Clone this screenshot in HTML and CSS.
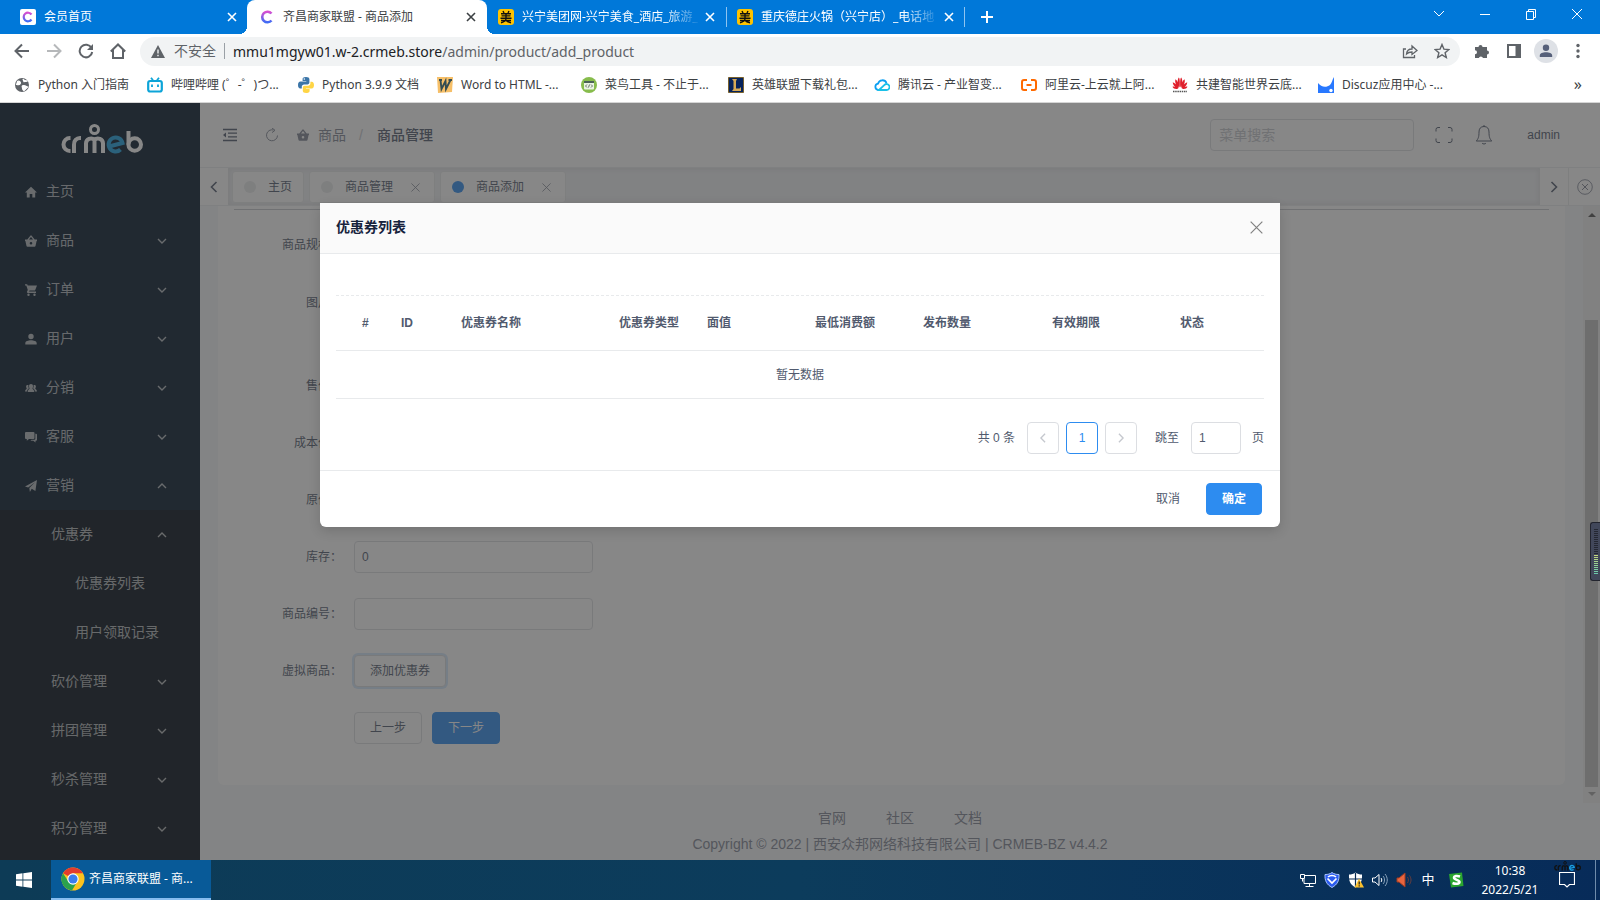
FILE: index.html
```html
<!DOCTYPE html>
<html lang="zh-CN">
<head>
<meta charset="utf-8">
<title>齐昌商家联盟 - 商品添加</title>
<link rel="stylesheet" href="styles.css">
</head>
<body>
<svg class="defs" aria-hidden="true">
  <defs>
    <linearGradient id="cg" x1="0" y1="0" x2="0" y2="1"><stop offset="0" stop-color="#d94fd0"/><stop offset="1" stop-color="#3f6cf5"/></linearGradient>
    <symbol id="x" viewBox="0 0 10 10"><path d="M1 1l8 8M9 1l-8 8" fill="none" stroke="currentColor" stroke-width="1.6"/></symbol>
    <symbol id="xthin" viewBox="0 0 10 10"><path d="M.5.5l9 9M9.500.5l-9 9" fill="none" stroke="currentColor" stroke-width=".9"/></symbol>
    <symbol id="down" viewBox="0 0 10 10"><path d="M1 3l4 4 4-4" fill="none" stroke="currentColor" stroke-width="1.4"/></symbol>
    <symbol id="up" viewBox="0 0 10 10"><path d="M1 7l4-4 4 4" fill="none" stroke="currentColor" stroke-width="1.4"/></symbol>
    <symbol id="left" viewBox="0 0 12 12"><path d="M8.500 1l-5 5 5 5" fill="none" stroke="currentColor" stroke-width="1.6"/></symbol>
    <symbol id="right" viewBox="0 0 12 12"><path d="M3.500 1l5 5-5 5" fill="none" stroke="currentColor" stroke-width="1.6"/></symbol>
    <symbol id="basket" viewBox="0 0 12 12"><path fill="currentColor" fill-rule="evenodd" d="M0 4.500h2.300L5.300.8a.9.9 0 0 1 1.400 0l3 3.700H12v1.400h-.4L10.500 11a1 1 0 0 1-1 .8h-7a1 1 0 0 1-1-.8L.4 5.900H0zM4 4.500h4L6 2.100zM6 7a1.300 1.300 0 1 0 0 2.600A1.300 1.300 0 0 0 6 7z"/></symbol>
    <symbol id="mei" viewBox="0 0 16 16"><rect width="16" height="16" rx="3" fill="#ffc300"/><path d="M5 2l1 2M11 2l-1 2M3 4.700h10M3.500 6.900h9M2.500 9.200h11M8 4.500v5M3 11.500h10M8 9.500c0 2-2 3.500-5 4.300M8 11.300c1 1.300 2.500 2 5 2.500" stroke="#111" stroke-width="1.400" fill="none"/></symbol>
    <symbol id="crmeb" viewBox="0 0 82 30"><g fill="none" stroke="currentColor" stroke-width="4"><path d="M9.500 14H9a6.500 6.500 0 0 0 0 13h.5M13 29v-8.500a6 6 0 0 1 6-6.500h1M25 29v-9.500a5 5 0 0 1 8.500-3.500v13M33.500 16a5 5 0 0 1 8.500 3.500V29M67.500 7v13.500"/><circle cx="33.500" cy="5.500" r="4" stroke-width="3"/><circle cx="73.700" cy="20.500" r="6.300"/></g><path class="logo-e" d="M48 22.500l13.500-3.500a7 7 0 1 0-2 6.500" fill="none" stroke-width="4"/></symbol>
  </defs>
</svg>

<header class="browser">
  <div class="tabstrip">
    <div class="tab"><svg class="fav" viewBox="0 0 16 16"><rect width="16" height="16" rx="2" fill="#fff"/><path d="M11.500 5.500a4.300 4.300 0 1 0 0 5" fill="none" stroke="url(#cg)" stroke-width="2.200"/></svg><span class="tab-title">会员首页</span><button aria-label="关闭"><svg><use href="#x"/></svg></button></div>
    <div class="tab active"><svg class="fav" viewBox="0 0 16 16"><path d="M12.500 4.500a5.300 5.300 0 1 0 0 7" fill="none" stroke="url(#cg)" stroke-width="2.600"/></svg><span class="tab-title">齐昌商家联盟 - 商品添加</span><button aria-label="关闭"><svg><use href="#x"/></svg></button></div>
    <div class="tab"><svg class="fav"><use href="#mei"/></svg><span class="tab-title fade">兴宁美团网-兴宁美食_酒店_旅游_</span><button aria-label="关闭"><svg><use href="#x"/></svg></button></div>
    <div class="tab ruled"><svg class="fav"><use href="#mei"/></svg><span class="tab-title fade">重庆德庄火锅（兴宁店）_电话地</span><button aria-label="关闭"><svg><use href="#x"/></svg></button></div>
    <button class="newtab" aria-label="新标签页"><svg viewBox="0 0 12 12"><path d="M6 0v12M0 6h12" stroke="#fff" stroke-width="2"/></svg></button>
    <div class="winctl">
      <button aria-label="搜索标签页"><svg viewBox="0 0 12 12"><path d="M1 3l5 5 5-5"/></svg></button>
      <button aria-label="最小化"><svg viewBox="0 0 12 12"><path d="M1 6.500h10"/></svg></button>
      <button aria-label="还原"><svg viewBox="0 0 12 12"><path d="M1.500 3.500h7v8h-7zM3.500 3.500v-2h7v8h-2"/></svg></button>
      <button aria-label="关闭窗口"><svg viewBox="0 0 12 12"><path d="M1 1l10 10M11 1L1 11"/></svg></button>
    </div>
  </div>
  <div class="toolbar">
    <button aria-label="后退"><svg viewBox="0 0 16 16"><path d="M15 8H2M8 1.500L1.500 8 8 14.500"/></svg></button>
    <button aria-label="前进" class="off"><svg viewBox="0 0 16 16"><path d="M1 8h13M8 1.500L14.500 8 8 14.500"/></svg></button>
    <button aria-label="重新加载"><svg viewBox="0 0 16 16"><path d="M13.500 5A6.300 6.300 0 1 0 14.200 9"/><path d="M15 1v6H9z" fill="#5f6368" stroke="none"/></svg></button>
    <button aria-label="主页"><svg viewBox="0 0 16 16"><path d="M.8 8.500L8 1.500l7.200 7M3 7v8h10V7"/></svg></button>
    <div class="omnibox">
      <svg class="warn" viewBox="0 0 14 13"><path fill="#5f6368" fill-rule="evenodd" d="M7 0l7 13H0zM6.300 4.500v4h1.400v-4zm0 5.200v1.500h1.400V9.700z"/></svg>
      <span class="insecure">不安全</span>
      <span class="url"><b>mmu1mgyw01.w-2.crmeb.store</b>/admin/product/add_product</span>
      <button aria-label="分享"><svg viewBox="0 0 16 16"><path d="M4 6H1.500v8.500h11V12M4.500 11c.3-3.500 2.500-5 5.500-5V3l5 4.500-5 4V9c-2.500 0-4 .5-5.500 2z" stroke-width="1.300"/></svg></button>
      <button aria-label="收藏"><svg viewBox="0 0 16 16"><path d="M8 1.500l1.900 4.600 5 .4-3.800 3.200 1.200 4.800L8 11.900l-4.300 2.600 1.200-4.800L1.100 6.500l5-.4z" stroke-width="1.400"/></svg></button>
    </div>
    <button aria-label="扩展程序"><svg viewBox="0 0 16 16"><path d="M1 4h3.500a2 2 0 1 1 4 0H13v3.500a2 2 0 1 1 0 4V15H9a2.200 2.200 0 0 0-4.200 0H1v-3.800a2 2 0 0 0 0-4z" fill="#5f6368" stroke="none"/></svg></button>
    <button aria-label="侧边栏"><svg viewBox="0 0 16 16"><path d="M2 2h12v12H2z" stroke-width="2"/><path d="M9.500 2H14v12H9.500z" fill="#5f6368" stroke="none"/></svg></button>
    <button aria-label="用户" class="avatar"><svg viewBox="0 0 16 16"><path d="M8 1.500a3.200 3.200 0 1 1 0 6.400 3.200 3.200 0 0 1 0-6.400zM1.800 14v-1.500c0-2 3-3.200 6.200-3.200s6.200 1.200 6.200 3.200V14z" fill="#56607a" stroke="none"/></svg></button>
    <button aria-label="菜单"><svg viewBox="0 0 16 16"><g fill="#5f6368" stroke="none"><circle cx="8" cy="2.500" r="1.700"/><circle cx="8" cy="8" r="1.700"/><circle cx="8" cy="13.500" r="1.700"/></g></svg></button>
  </div>
  <nav class="bookmarks">
    <a href="#"><svg viewBox="0 0 16 16"><circle cx="8" cy="8" r="7" fill="#5f6368"/><path d="M3 4.500c3-1 4 1 3 2.500s-3 0-4 .5M9 2l1 2.500 3.500-.5M8 9c2-1 4 0 5.500 1L10 13.500c-2-.5-1-3-2-4.500" stroke="#fff" stroke-width="1.300" fill="#fff"/></svg>Python 入门指南</a>
    <a href="#"><svg viewBox="0 0 16 16"><path d="M4 .8l2 2.500M12 .8l-2 2.500" stroke="#0ca4d8" stroke-width="1.800"/><rect x="1.200" y="4" width="13.600" height="10.500" rx="2" fill="none" stroke="#0ca4d8" stroke-width="2.200"/><path d="M5 7.500v2.500M11 7.500v2.500" stroke="#0ca4d8" stroke-width="1.800"/></svg>哔哩哔哩 (゜-゜)つ...</a>
    <a href="#"><svg viewBox="0 0 16 16"><path d="M8 0C5 0 4.600 1 4.600 2.200V4H8.300v.6H2.500C.8 4.600 0 6 0 8s.8 3.500 2.300 3.500h1.500V9.600c0-1.200 1-2.200 2.300-2.200h3.500c1 0 1.800-.8 1.800-1.900V2.300C11.400.8 10.200 0 8 0z" fill="#3b75a8"/><path d="M8.200 16c3 0 3.400-1 3.400-2.200V12H7.900v-.6h5.800c1.600 0 2.300-1.400 2.300-3.400s-.8-3.300-2.300-3.300h-1.300v1.800c0 1.200-1 2.200-2.300 2.200H6.600c-1 0-1.800.8-1.800 1.900v3.200c0 1.500 1.200 2.200 3.400 2.200z" fill="#ffd545"/><circle cx="6.300" cy="2" r=".8" fill="#fff"/></svg>Python 3.9.9 文档</a>
    <a href="#"><svg viewBox="0 0 16 16"><path d="M0 0h16l-1 15-14 1z" fill="#f6bf68"/><path d="M2 3h3M3.500 3l1 9 4-8 .5 8 4.500-9M11.500 3H15" stroke="#344d52" stroke-width="1.900" fill="none"/></svg>Word to HTML -...</a>
    <a href="#"><svg viewBox="0 0 16 16"><circle cx="8" cy="8" r="8" fill="#87bc4c"/><rect x="3" y="4" width="10" height="8.500" rx="1" fill="#eaf3e3"/><path d="M3 5h10" stroke="#4b6257" stroke-width="2"/><path d="M6 7.500L4.500 9 6 10.500M10 7.500L11.500 9 10 10.500M8.500 7.500l-1 3" stroke="#66746a" fill="none"/></svg>菜鸟工具 - 不止于...</a>
    <a href="#"><svg viewBox="0 0 16 16"><path d="M.5.5h15v15H.5z" fill="#06235c" stroke="#79612c"/><path d="M4 2h5L8 4v7.500h3.500L13 10v4H4l1.500-2V4z" fill="#d6a956"/></svg>英雄联盟下载礼包...</a>
    <a href="#"><svg viewBox="0 0 16 16" fill="none"><path d="M4 13a3.200 3.200 0 0 1 0-6.300A4.500 4.500 0 0 1 12.500 6" stroke="#0a9ff2" stroke-width="1.800"/><path d="M3.500 13h9a3 3 0 1 0-2-5.200L5 13" stroke="#19c0e8" stroke-width="1.800"/></svg>腾讯云 - 产业智变...</a>
    <a href="#"><svg viewBox="0 0 16 16"><path d="M6 3H3a2 2 0 0 0-2 2v6a2 2 0 0 0 2 2h3M10 3h3a2 2 0 0 1 2 2v6a2 2 0 0 1-2 2h-3M5.500 8h5" fill="none" stroke="#ff6a00" stroke-width="2"/></svg>阿里云-上云就上阿...</a>
    <a href="#"><svg viewBox="0 0 16 16"><g fill="#e0202c"><path d="M7.700 10.500C5.500 7 5 3 6.800.5 8 1.500 8 6 7.700 10.500zM8.300 10.500C10.500 7 11 3 9.200.5 8 1.500 8 6 8.300 10.500zM7 10.800C4 8.500 2.500 5 3.500 2.200 5.500 3.500 6.500 7 7 10.800zM9 10.800c3-2.300 4.500-5.800 3.500-8.600C10.500 3.500 9.500 7 9 10.800zM6.500 11.200C3 10.500.8 8 .8 5.200 3.300 6 5.500 8.500 6.500 11.200zM9.500 11.200c3.500-.7 5.700-3.200 5.700-6C12.700 6 10.500 8.500 9.500 11.200zM6 11.700c-2.500.7-4.500 0-5.500-2C2.500 9.300 4.500 10 6 11.700zM10 11.700c2.500.7 4.500 0 5.500-2-2-.4-4 .3-5.500 2z"/></g><path d="M1 14.500h14" stroke="#555" stroke-width="1.500" stroke-dasharray="1.500 .7"/></svg>共建智能世界云底...</a>
    <a href="#"><svg viewBox="0 0 16 16"><path d="M0 6c3 4 8 5 12 2 2-2 2-5 4-8v16H0z" fill="#2878ff"/><circle cx="13" cy="13.500" r="1.700" fill="#fff"/></svg>Discuz应用中心 -...</a>
    <button class="more" aria-label="更多书签">»</button>
  </nav>
</header>

<div class="app">
  <aside class="side">
    <div class="logo"><svg role="img" aria-label="crmeb"><use href="#crmeb"/></svg></div>
    <nav class="menu">
      <a href="#"><svg class="mi" viewBox="0 0 12 12"><path fill="currentColor" d="M6 .8l6 5.700h-1.800v5H7.300V8H4.700v3.500H1.800v-5H0z"/></svg><span>主页</span></a>
      <a href="#"><svg class="mi"><use href="#basket"/></svg><span>商品</span><svg class="ar"><use href="#down"/></svg></a>
      <a href="#"><svg class="mi" viewBox="0 0 12 12"><path fill="currentColor" d="M0 .3h2.200l.5 1.200H12L10 6.500H4.500L4 7.600h7V9H2.500L1.800 8l1-2L1.300 1.500H0zM3.500 9.500a1.200 1.200 0 1 1 0 2.400 1.200 1.200 0 0 1 0-2.400zM9.500 9.500a1.200 1.200 0 1 1 0 2.400 1.200 1.200 0 0 1 0-2.400z"/></svg><span>订单</span><svg class="ar"><use href="#down"/></svg></a>
      <a href="#"><svg class="mi" viewBox="0 0 12 12"><path fill="currentColor" d="M6 .8a2.700 2.700 0 1 1 0 5.400A2.700 2.700 0 0 1 6 .8zM.3 11.500V10c0-1.800 3-2.800 5.700-2.800s5.700 1 5.700 2.800v1.500z"/></svg><span>用户</span><svg class="ar"><use href="#down"/></svg></a>
      <a href="#"><svg class="mi" viewBox="0 0 12 12"><path fill="currentColor" d="M6 2c1.300 0 2 .9 2 2.200C8 5.500 7.500 6 7.500 6.700 8 7.500 9.300 7.700 9.300 10H2.700c0-2.300 1.300-2.500 1.800-3.300C4.500 6 4 5.500 4 4.200 4 2.900 4.700 2 6 2zM2.500 3c.4 0 .8.100 1 .3-.3 1.200 0 2.200.4 3C3.500 7 2.200 7.500 2 9.500H0C0 7.500 1.200 7.500 1.700 6.700 1.700 6 1.100 5.700 1.100 4.600 1.100 3.700 1.600 3 2.500 3zM9.500 3c-.4 0-.8.100-1 .3.300 1.200 0 2.200-.4 3 .4.700 1.700 1.200 1.900 3.200h2c0-2-1.200-2-1.700-2.800 0-.7.600-1 .6-2.100C10.900 3.700 10.400 3 9.500 3z"/></svg><span>分销</span><svg class="ar"><use href="#down"/></svg></a>
      <a href="#"><svg class="mi" viewBox="0 0 12 12"><path fill="currentColor" d="M1 1h7.500a1 1 0 0 1 1 1v5a1 1 0 0 1-1 1H4L1.800 9.800V8H1a1 1 0 0 1-1-1V2a1 1 0 0 1 1-1zM10.300 2.800h.7a1 1 0 0 1 1 1v5a1 1 0 0 1-1 1h-.5v1.700L8.300 9.800H5.500l1-1H9.300a1 1 0 0 0 1-1z"/></svg><span>客服</span><svg class="ar"><use href="#down"/></svg></a>
      <a href="#"><svg class="mi" viewBox="0 0 12 12"><path fill="currentColor" d="M12 0l-1.600 11-3.700-2.200L4.900 12 4.300 8 10 2.300 3.200 7.600 0 6.500z"/></svg><span>营销</span><svg class="ar"><use href="#up"/></svg></a>
      <div class="sub">
        <a href="#"><span>优惠券</span><svg class="ar"><use href="#up"/></svg></a>
        <a href="#" class="deep"><span>优惠券列表</span></a>
        <a href="#" class="deep"><span>用户领取记录</span></a>
        <a href="#"><span>砍价管理</span><svg class="ar"><use href="#down"/></svg></a>
        <a href="#"><span>拼团管理</span><svg class="ar"><use href="#down"/></svg></a>
        <a href="#"><span>秒杀管理</span><svg class="ar"><use href="#down"/></svg></a>
        <a href="#"><span>积分管理</span><svg class="ar"><use href="#down"/></svg></a>
      </div>
    </nav>
  </aside>

  <div class="main">
    <div class="topbar">
      <button class="fold" aria-label="折叠菜单"><svg viewBox="0 0 16 14"><path d="M1 1.500h14M6 5.200h9M6 8.800h9M1 12.500h14" stroke="currentColor" stroke-width="1.300"/><path d="M1 7l3-2.500v5z" fill="currentColor"/></svg></button>
      <button class="reload" aria-label="刷新"><svg viewBox="0 0 14 14"><path d="M8.500 2A5.500 5.500 0 1 0 12.500 7.500M7 0l3 2.300L7 4.600" fill="none" stroke="currentColor"/></svg></button>
      <nav class="crumbs"><a href="#"><svg><use href="#basket"/></svg>商品</a><i>/</i><b>商品管理</b></nav>
      <input class="search" type="text" placeholder="菜单搜索" aria-label="菜单搜索">
      <button aria-label="全屏"><svg viewBox="0 0 18 18"><path d="M1 5.500V3.500A2 2 0 0 1 3 1.500h2M13 1.500h2a2 2 0 0 1 2 2v2M17 12.500v2a2 2 0 0 1-2 2h-2M5 16.500H3a2 2 0 0 1-2-2v-2" fill="none" stroke="currentColor"/></svg></button>
      <button class="bell" aria-label="通知"><svg viewBox="0 0 18 20"><path d="M9 1.500c-3.500 0-5 2.300-5 5.500 0 5-.8 7-2.800 9h15.600c-2-2-2.800-4-2.800-9 0-3.200-1.500-5.500-5-5.500zM7 18c.5 1.300 3.500 1.300 4 0M8 1h2" fill="none" stroke="currentColor"/></svg></button>
      <a href="#" class="admin">admin</a>
    </div>
    <div class="tags">
      <button class="tagbtn" aria-label="向左"><svg><use href="#left"/></svg></button>
      <div class="taglist">
        <a href="#"><i></i>主页</a>
        <a href="#" class="closable"><i></i>商品管理<svg><use href="#xthin"/></svg></a>
        <a href="#" class="closable current"><i></i>商品添加<svg><use href="#xthin"/></svg></a>
      </div>
      <button class="tagbtn" aria-label="向右"><svg><use href="#right"/></svg></button>
      <button class="tagbtn all" aria-label="关闭全部"><svg viewBox="0 0 16 16"><circle cx="8" cy="8" r="7.300" fill="none" stroke="currentColor" stroke-width=".9"/><path d="M5 5l6 6M11 5l-6 6" stroke="currentColor"/></svg></button>
    </div>
    <div class="view">
      <div class="page">
        <form class="card">
          <div class="row"><span class="lab">商品规格：</span></div>
          <div class="row tall"><span class="lab">图片：</span></div>
          <div class="row"><label class="lab" for="f1">售价：</label><input id="f1" type="text"></div>
          <div class="row"><label class="lab" for="f2">成本价：</label><input id="f2" type="text"></div>
          <div class="row"><label class="lab" for="f3">原价：</label><input id="f3" type="text"></div>
          <div class="row"><label class="lab" for="f4">库存：</label><input id="f4" type="text" value="0"></div>
          <div class="row"><label class="lab" for="f5">商品编号：</label><input id="f5" type="text"></div>
          <div class="row"><label class="lab" for="f6">虚拟商品：</label><button id="f6" type="button" class="btn focus">添加优惠券</button></div>
          <div class="row"><span class="lab"></span><button type="button" class="btn">上一步</button><button type="button" class="btn primary">下一步</button></div>
        </form>
        <footer class="foot">
          <nav><a href="#">官网</a><a href="#">社区</a><a href="#">文档</a></nav>
          <p>Copyright © 2022 | 西安众邦网络科技有限公司 | CRMEB-BZ v4.4.2</p>
        </footer>
      </div>
      <div class="scroll"><svg viewBox="0 0 8 4"><path d="M0 4l4-4 4 4z" fill="#505050"/></svg><div class="thumb"></div><svg viewBox="0 0 8 4"><path d="M0 0l4 4 4-4z" fill="#a3a3a3"/></svg></div>
    </div>
  </div>

  <div class="mask">
    <section class="modal" role="dialog" aria-labelledby="mt">
      <header><h2 id="mt">优惠券列表</h2><button aria-label="关闭"><svg><use href="#xthin"/></svg></button></header>
      <div class="mbody">
        <table>
          <colgroup><col class="c1"><col class="c2"><col class="c3"><col class="c4"><col class="c5"><col class="c5"><col class="c7"><col class="c8"><col class="c9"></colgroup>
          <thead><tr><th>#</th><th>ID</th><th>优惠券名称</th><th>优惠券类型</th><th>面值</th><th>最低消费额</th><th>发布数量</th><th>有效期限</th><th>状态</th></tr></thead>
          <tbody><tr><td colspan="9">暂无数据</td></tr></tbody>
        </table>
        <div class="pager">
          <span class="total">共 0 条</span>
          <button aria-label="上一页"><svg><use href="#left"/></svg></button>
          <button class="cur">1</button>
          <button aria-label="下一页"><svg><use href="#right"/></svg></button>
          <label for="pg">跳至</label><input id="pg" type="text" value="1"><span>页</span>
        </div>
      </div>
      <footer><button class="btn text">取消</button><button class="btn primary">确定</button></footer>
    </section>
  </div>
  <div class="meter"></div>
</div>

<footer class="taskbar">
  <button class="start" aria-label="开始"><svg viewBox="0 0 16 16"><path fill="#fff" d="M0 2.200l6.500-.9v6.200H0zM7.300 1.200L16 0v7.500H7.300zM0 8.400h6.500v6.300L0 13.800zM7.300 8.400H16V16l-8.700-1.200z"/></svg></button>
  <button class="task"><svg viewBox="0 0 24 24"><circle cx="12" cy="12" r="11.500" fill="#fcc31e"/><path d="M2 6.200A11.500 11.500 0 0 1 22 6.300H12L7 9z" fill="#e33b2e"/><path d="M2 6.200A11.500 11.500 0 0 0 11 23.500l5-8.500-4 2-5-3z" fill="#2ba24c"/><circle cx="12" cy="12" r="5.700" fill="#fff"/><circle cx="12" cy="12" r="4.600" fill="#3b7ded"/></svg>齐昌商家联盟 - 商...</button>
  <div class="tray">
    <svg viewBox="0 0 16 16"><path d="M5 3.500h10.500v8H4V7M9.500 12v2.500M5.500 14.500h8M.5 2.500h4v4h-4zM2.500 6.500v3" fill="none" stroke="#fff"/></svg>
    <svg viewBox="0 0 16 16"><path d="M8 .5c2 1.500 4 2 7 2 .3 6-1.500 10-7 13C2.500 12.500.7 8.500 1 2.500c3 0 5-.5 7-2z" fill="#2b5cf0" stroke="#a9c4ff"/><path d="M4 5c2-2 6-2 8 0M3.500 6.500L8 11l4.500-4.500" fill="none" stroke="#fff" stroke-width="1.700"/></svg>
    <svg viewBox="0 0 16 16"><path d="M7.500.5c2 1.500 4 2 6.500 2 .3 6-1 10-6.500 13C2 12.500.7 8.500 1 2.500c2.500 0 4.500-.5 6.500-2z" fill="#fff"/><path d="M7.500 1v14M1 7h13" stroke="#082b52" stroke-width="1.200"/><path d="M11 6.500l5 9H6.500z" fill="#fbc02d"/><path d="M11.200 9.500v3M11.200 13.200v1.300" stroke="#222" stroke-width="1.200"/></svg>
    <svg viewBox="0 0 16 16" fill="none" stroke="#fff"><path d="M.5 6h2.500L7 2.500v11L3 10H.5z"/><path d="M9 6c1 1 1 3 0 4"/><path d="M11 4c2 2 2 6 0 8M13 2c3 3.500 3 8.500 0 12" stroke="#8aa4bd"/></svg>
    <svg viewBox="0 0 16 16"><path d="M1 6h2l6-5v14L3 10H1z" fill="#e8663f" stroke="#a33a20"/><path d="M11.500 5c1.200 2 1.200 4 0 6M13.500 3.500c2 3 2 6 0 9" fill="none" stroke="#673d3d"/></svg>
    <span class="ime">中</span>
    <svg class="sg" viewBox="0 0 16 16"><path d="M1 2l13-1.500L15.500 14 3 15.500z" fill="#2aa52f"/><path d="M12 4.500c-3-1-6-.7-6 1.300S11.500 8 11.500 10s-4 2.300-7 1" fill="none" stroke="#fff" stroke-width="2.500"/></svg>
    <time>10:38<br>2022/5/21</time>
    <span class="notice"><svg class="note" viewBox="0 0 16 16"><path d="M.5.5h15v12h-5L8 15l-2.500-2.500h-5z" fill="none" stroke="#fff" stroke-width="1.200"/></svg><svg class="minilogo"><use href="#crmeb"/></svg></span>
  </div>
</footer>
</body>
</html>
```
FILE: styles.css
```css
* { box-sizing: border-box; }
body { margin: 0; min-height: 100vh; display: flex; flex-direction: column; overflow: hidden; font: 12px/1.5 "Liberation Sans", "Noto Sans CJK SC", sans-serif; color: #515a6e; }
button { font: inherit; color: inherit; border: 0; background: none; padding: 0; display: flex; align-items: center; justify-content: center; flex: none; }
a { color: inherit; text-decoration: none; }
svg { flex: none; }
input { font: inherit; color: #515a6e; }
.defs { position: absolute; width: 0; height: 0; }
.logo-e { stroke: #1ba1e2; }

.browser { background: #fff; border-bottom: 1px solid #d5d5d5; font-family: "Noto Sans", "Noto Sans CJK SC", sans-serif; }
.tabstrip { display: flex; height: 34px; background: #0078d9; color: #fff; }
.tab { width: 239px; display: flex; align-items: center; padding: 0 11px 0 11px; position: relative; }
.tab:first-child { width: 247px; padding: 0 10px 0 20px; }
.tab .fav { width: 16px; height: 16px; margin-right: 8px; }
.tab-title { flex: 1; white-space: nowrap; }
.fade { -webkit-mask-image: linear-gradient(90deg, #000 80%, transparent); mask-image: linear-gradient(90deg, #000 80%, transparent); }
.tab button { width: 10px; height: 10px; margin-left: 4px; }
.tab svg { width: 10px; height: 10px; }
.active { width: 240px; padding-left: 12px; background: #fff; color: #3c4043; border-radius: 8px 8px 0 0; }
.active::before, .active::after { content: ""; position: absolute; bottom: 0; width: 8px; height: 8px; }
.active::before { left: -8px; background: radial-gradient(circle at 0 0, transparent 8px, #fff 8px); }
.active::after { right: -8px; background: radial-gradient(circle at 100% 0, transparent 8px, #fff 8px); }
.ruled { background: linear-gradient(#8fc4f0, #8fc4f0) 0 50% / 1px 20px no-repeat, linear-gradient(#8fc4f0, #8fc4f0) 100% 50% / 1px 20px no-repeat; }
.newtab { width: 44px; }
.newtab svg { width: 12px; height: 12px; }
.winctl { display: flex; margin-left: auto; padding-bottom: 6px; }
.winctl button { width: 46px; }
.winctl svg { width: 12px; height: 12px; fill: none; stroke: #fff; }
.toolbar { display: flex; align-items: center; height: 34px; padding: 0 6px; }
.toolbar button { width: 32px; height: 28px; }
.toolbar button svg { width: 16px; height: 16px; fill: none; stroke: #5f6368; stroke-width: 2; }
.toolbar .off { opacity: .45; }
.omnibox { flex: 1; display: flex; align-items: center; height: 29px; background: #f1f3f4; border-radius: 15px; margin: 0 6px; padding: 0 2px 0 11px; color: #5f6368; font-size: 14px; }
.warn { width: 14px; height: 13px; margin-right: 9px; }
.insecure { padding-right: 8px; line-height: 16px; border-right: 1px solid #9aa0a6; margin-right: 8px; }
.url { flex: 1; }
.url b { font-weight: 400; color: #202124; }
.toolbar .avatar { width: 24px; height: 24px; margin: 0 4px; border-radius: 12px; background: #dee1e6; }
.bookmarks { display: grid; grid-template-columns: 133px 151px 139px 144px 147px 146px 147px 151px 146px 1fr auto; align-items: center; height: 34px; padding: 0 18px 0 14px; color: #3c4043; white-space: nowrap; }
.bookmarks a { display: flex; align-items: center; gap: 8px; }
.bookmarks svg { width: 16px; height: 16px; }
.more { font-size: 16px; line-height: 16px; padding-bottom: 3px; }

.app { flex: 1; display: flex; position: relative; }
.side { width: 200px; flex: none; background: #001529; color: rgba(255, 255, 255, .7); font-size: 14px; display: flex; flex-direction: column; }
.logo { height: 64px; color: #fff; padding: 21px 0 0 61px; }
.logo svg { display: block; width: 82px; height: 30px; }
.menu { flex: 1; display: flex; flex-direction: column; }
.menu a { display: flex; align-items: center; height: 49px; padding: 0 33px 0 25px; }
.menu span { flex: 1; }
.mi { width: 12px; height: 12px; margin-right: 9px; }
.ar { width: 10px; height: 10px; }
.sub { flex: 1; background: #000c17; }
.menu .sub a { padding-left: 51px; }
.menu .sub .deep { padding-left: 75px; }

.main { flex: 1; min-width: 0; display: flex; flex-direction: column; background: #f5f7f9; }
.topbar { display: flex; align-items: center; height: 64px; background: #fff; padding: 0 40px 0 22px; }
.fold svg { width: 16px; height: 14px; }
.reload { margin: 0 18px 0 27px; color: #808695; }
.reload svg { width: 14px; height: 14px; }
.crumbs { display: flex; flex: 1; font-size: 14px; color: #808695; }
.crumbs a { display: flex; align-items: center; gap: 9px; }
.crumbs svg { width: 12px; height: 12px; }
.crumbs i { font-style: normal; color: #c5c8ce; margin: 0 14px 0 13px; }
.crumbs b { font-weight: 500; color: #515a6e; }
input { height: 32px; border: 1px solid #dcdee2; border-radius: 4px; background: #fff; padding: 0 7px; }
.search { width: 204px; font-size: 14px; padding-left: 8px; }
.search::placeholder { color: #c5c8ce; }
.topbar > button svg { display: block; }
.search + button { margin: 0 22px 0 21px; color: #515a6e; }
.search + button svg { width: 18px; height: 18px; }
.bell svg { width: 18px; height: 20px; }
.admin { margin-left: 34px; }
.tags { display: flex; height: 39px; border: solid #eceef0; border-width: 1px 0; }
.tagbtn { width: 28px; background: #fff; }
.tagbtn svg { width: 12px; height: 12px; }
.tagbtn.all { width: 32px; border-left: 1px solid #e8eaec; color: #808695; }
.tagbtn.all svg { width: 16px; height: 16px; }
.taglist { flex: 1; display: flex; align-items: center; gap: 5px; padding-left: 4px; background: #f0f2f5; box-shadow: inset 0 0 4px 2px rgba(100, 100, 100, .1); }
.taglist a { height: 32px; display: flex; align-items: center; padding: 1px 11px 0; border: 1px solid #e8eaec; border-radius: 3px; background: #fff; }
.taglist .closable { padding-right: 14px; }
.taglist i { width: 12px; height: 12px; border-radius: 6px; background: #e8eaec; margin-right: 12px; }
.taglist .current i { background: #2d8cf0; }
.taglist svg { width: 9px; height: 9px; margin-left: 18px; color: #808695; }
.view { flex: 1; display: flex; }
.page { flex: 1; display: flex; flex-direction: column; padding: 0 18px; }
.card { background: #fff; border-radius: 0 0 6px 6px; padding: 3px 16px 17px; }
.card::before { content: ""; display: block; border-top: 1px solid #c5c8ce; margin-bottom: 18px; }
.row { display: flex; align-items: center; height: 33px; margin-bottom: 24px; }
.row.tall { height: 60px; align-items: flex-start; line-height: 36px; }
.lab { width: 120px; padding-right: 12px; text-align: right; white-space: nowrap; }
.row input { width: 239px; }
.btn { height: 32px; padding: 0 15px; border: 1px solid #dcdee2; border-radius: 4px; background: #fff; }
.btn.primary { background: #2d8cf0; border-color: #2d8cf0; color: #fff; }
.btn + .btn { margin-left: 10px; }
.btn.text { border-color: transparent; }
.focus { box-shadow: 0 0 0 2px rgba(45, 140, 240, .2); }
.foot { margin: 23px -17px 0 0; text-align: center; font-size: 14px; color: #808695; }
.foot nav { display: flex; justify-content: center; gap: 40px; }
.foot p { margin: 5px 0 0; }
.scroll { width: 17px; margin-bottom: 57px; display: flex; flex-direction: column; align-items: center; justify-content: space-between; background: #f1f1f1; padding: 7px 0; }
.scroll svg { width: 8px; height: 4px; }
.thumb { width: 13px; height: 467px; margin: auto 0 5px; background: #c1c1c1; }

.mask { position: absolute; inset: 0; background: rgba(55, 55, 55, .6); display: flex; justify-content: center; align-items: flex-start; padding-top: 100px; }
.modal { width: 60%; background: #fff; border-radius: 6px; box-shadow: 0 4px 12px rgba(0, 0, 0, .15); }
.modal header { display: flex; align-items: center; justify-content: space-between; height: 51px; padding: 0 17px 2px 16px; background: #fafafa; border-bottom: 1px solid #e8eaec; }
.modal h2 { margin: 0; font-size: 14px; font-weight: 700; color: #17233d; }
.modal header svg { width: 13px; height: 13px; color: #808080; }
.mbody { padding: 16px; }
table { width: 100%; margin-top: 25px; table-layout: fixed; border-collapse: separate; border-spacing: 0; border-top: 1px dashed #e8eaec; }
th { height: 55px; padding: 0; text-align: left; font-weight: 700; border-bottom: 1px solid #e8eaec; }
th:first-child { padding-left: 26px; }
td { height: 48px; padding: 0; text-align: center; border-bottom: 1px solid #e8eaec; }
.c1 { width: 65px; }
.c2 { width: 60px; }
.c3 { width: 158px; }
.c4 { width: 88px; }
.c5 { width: 108px; }
.c7 { width: 129px; }
.c8 { width: 128px; }
.c9 { width: 84px; }
.pager { display: flex; align-items: center; justify-content: flex-end; margin-top: 23px; }
.pager button { width: 32px; height: 32px; border: 1px solid #dcdee2; border-radius: 4px; margin-right: 7px; color: #c5c8ce; }
.pager button svg { width: 10px; height: 10px; }
.pager .cur { border-color: #2d8cf0; color: #2d8cf0; }
.total { margin-right: 12px; }
.pager label { margin: 0 12px 0 11px; }
.pager input { width: 50px; margin-right: 11px; }
.modal footer { display: flex; justify-content: flex-end; padding: 12px 18px; border-top: 1px solid #e8eaec; }
.modal .primary { font-weight: 700; }
.meter { position: absolute; right: 0; top: 419px; width: 10px; height: 59px; border: 1px solid #22242e; border-right: 0; border-radius: 3px 0 0 3px; padding: 6px 2px 6px 3px; background: #41475a; }
.meter::before { content: ""; display: block; height: 46px; background: repeating-linear-gradient(transparent 0 1px, #41475a 1px 2px), linear-gradient(#242732 56%, #c5d77c 57%, #63c9b0); }

.taskbar { height: 40px; display: flex; background: linear-gradient(90deg, #0d3b56, #0c3c5c 50%, #072b59); color: #fff; font-family: "Noto Sans", "Noto Sans CJK SC", sans-serif; }
.start { width: 51px; padding-right: 3px; }
.start svg { width: 16px; height: 16px; }
.task { width: 160px; justify-content: flex-start; gap: 4px; padding-left: 10px; background: #085a98; border-bottom: 2px solid #86bdf0; white-space: nowrap; }
.task svg { width: 24px; height: 24px; }
.tray { margin-left: auto; display: flex; align-items: center; gap: 8px; border-right: 1px solid #6f8cab; padding-right: 20px; margin-right: 4px; }
.tray svg { width: 16px; height: 16px; }
.ime { font-size: 13px; width: 16px; text-align: center; }
.tray .sg { margin-left: 4px; }
time { width: 76px; text-align: center; line-height: 19px; }
.notice { position: relative; display: flex; margin-left: 3px; color: #111; }
.tray .minilogo { position: absolute; left: -5px; top: -11px; width: 27px; height: 10px; }
```
